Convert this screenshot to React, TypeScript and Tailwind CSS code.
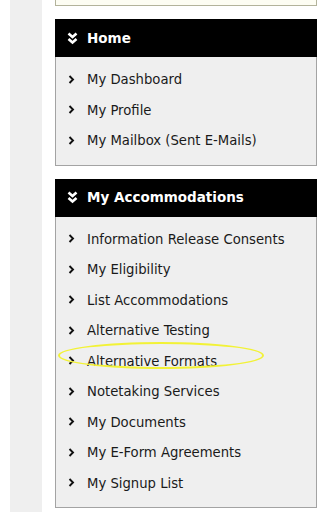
import React from 'react';

type Section = {
  title: string;
  items: string[];
};

const sections: Section[] = [
  {
    title: 'Home',
    items: ['My Dashboard', 'My Profile', 'My Mailbox (Sent E-Mails)'],
  },
  {
    title: 'My Accommodations',
    items: [
      'Information Release Consents',
      'My Eligibility',
      'List Accommodations',
      'Alternative Testing',
      'Alternative Formats',
      'Notetaking Services',
      'My Documents',
      'My E-Form Agreements',
      'My Signup List',
    ],
  },
];

const DoubleChevron = () => (
  <svg width="11" height="13" viewBox="0 0 11 13" className="shrink-0">
    <path d="M1.5 1.5 L5.5 5 L9.5 1.5" fill="none" stroke="#fff" strokeWidth="2.6" />
    <path d="M1.5 7 L5.5 10.5 L9.5 7" fill="none" stroke="#fff" strokeWidth="2.6" />
  </svg>
);

const Chevron = () => (
  <svg width="7" height="9" viewBox="0 0 7 9" className="shrink-0">
    <path d="M1.5 1 L5 4.5 L1.5 8" fill="none" stroke="#111" strokeWidth="1.9" />
  </svg>
);

const Panel: React.FC<{ section: Section }> = ({ section }) => {
  return (
    <div>
      <div className="h-[38px] bg-black flex items-center gap-[9px] pl-[12px]">
        <DoubleChevron />
        <span className="text-white font-bold text-[13.5px]">{section.title}</span>
      </div>
      <ul className="bg-[#efefef] border border-t-0 border-[#a3a3a3] pt-[7px] pb-[9px]">
        {section.items.map((item) => (
          <li key={item} className="relative h-[30.5px] flex items-center pl-[12px] gap-[12px]">
            <Chevron />
            <span
              className="text-[14.7px] text-[#1a1a1a]"
              style={{ fontFamily: '"DejaVu Sans Condensed", "DejaVu Sans", sans-serif' }}
            >
              {item}
            </span>
            {item === 'Alternative Formats' && (
              <span className="absolute left-[2px] top-[-4px] w-[206px] h-[27px] rounded-[50%] border-2 border-[#f2f236]" />
            )}
          </li>
        ))}
      </ul>
    </div>
  );
};

export default function App() {
  return (
    <div
      className="w-[329px] h-[512px] bg-white flex overflow-hidden"
      style={{ fontFamily: '"DejaVu Sans", Verdana, sans-serif' }}
    >
      <div className="w-[10px]" />
      <div className="w-[32px] bg-[#efefef]" />
      <div className="w-[13px]" />
      <div className="w-[262px] flex flex-col">
        <div className="h-[6px] bg-[#fdfdf3] border-x border-b border-[#b3b39b]" />
        <div className="h-[13px]" />
        <Panel section={sections[0]} />
        <div className="h-[13px]" />
        <Panel section={sections[1]} />
      </div>
    </div>
  );
}
